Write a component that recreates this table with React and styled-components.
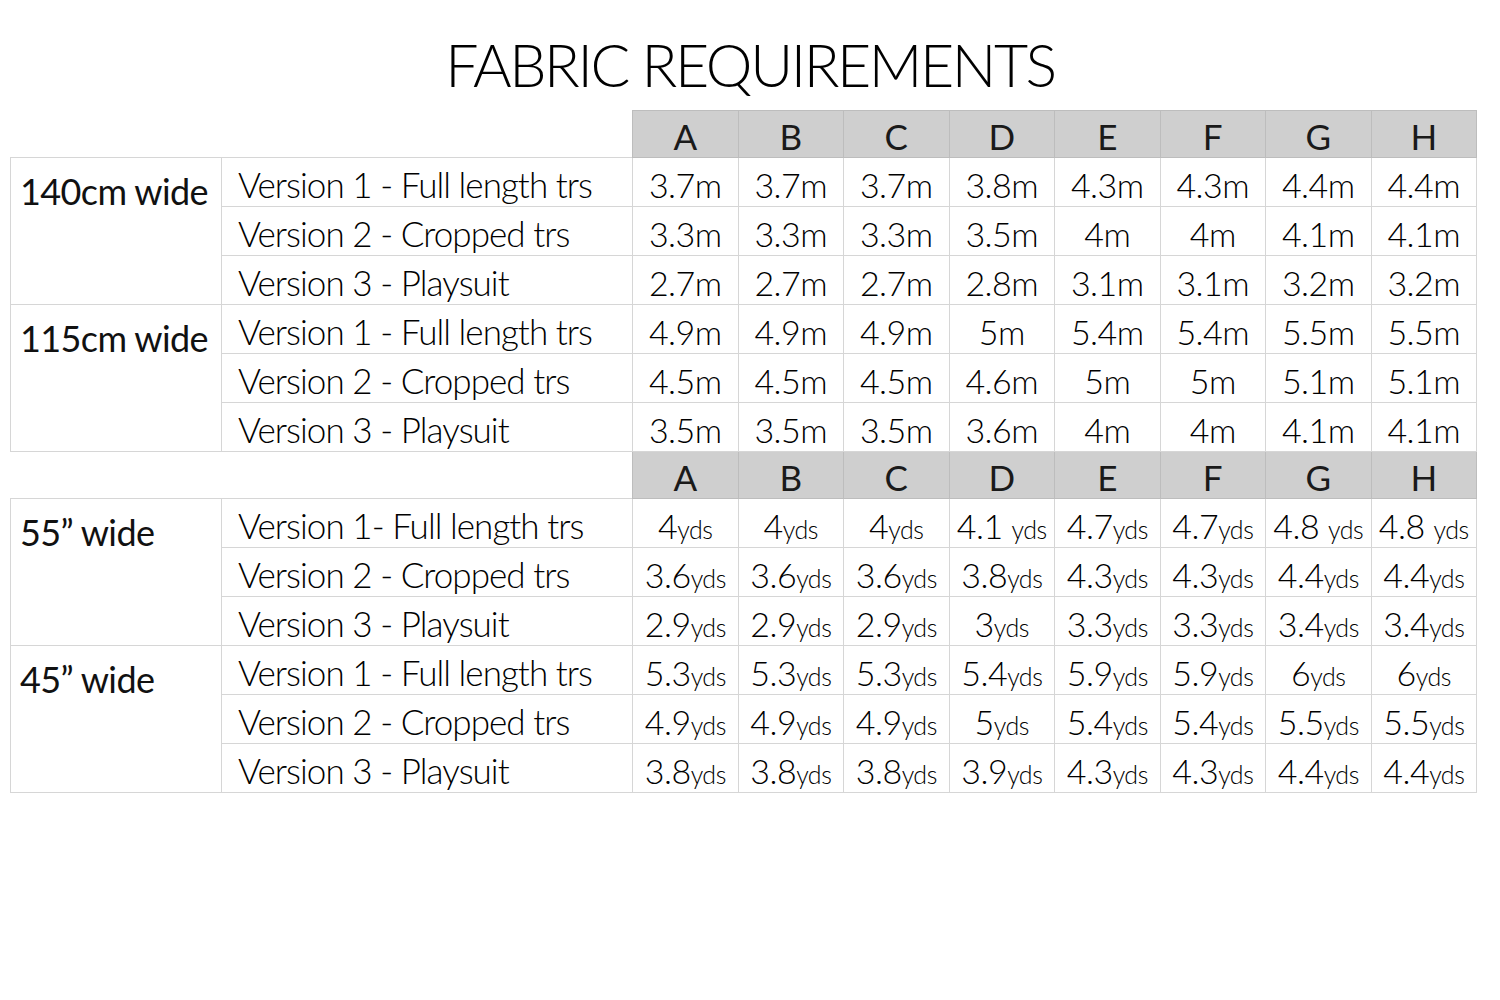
import React from 'react'
import styled, { createGlobalStyle } from 'styled-components'

const GlobalStyle = createGlobalStyle`
  body {
    margin: 0;
    background: #fff;
    color: #111;
    font-family: Lato, "Noto Sans", sans-serif;
  }
`

const SIZES = ['A', 'B', 'C', 'D', 'E', 'F', 'G', 'H']

const METRIC = [
  {
    label: '140cm wide',
    rows: [
      ['Version 1 - Full length trs', ['3.7m', '3.7m', '3.7m', '3.8m', '4.3m', '4.3m', '4.4m', '4.4m']],
      ['Version 2 - Cropped trs', ['3.3m', '3.3m', '3.3m', '3.5m', '4m', '4m', '4.1m', '4.1m']],
      ['Version 3 - Playsuit', ['2.7m', '2.7m', '2.7m', '2.8m', '3.1m', '3.1m', '3.2m', '3.2m']],
    ],
  },
  {
    label: '115cm wide',
    rows: [
      ['Version 1 - Full length trs', ['4.9m', '4.9m', '4.9m', '5m', '5.4m', '5.4m', '5.5m', '5.5m']],
      ['Version 2 - Cropped trs', ['4.5m', '4.5m', '4.5m', '4.6m', '5m', '5m', '5.1m', '5.1m']],
      ['Version 3 - Playsuit', ['3.5m', '3.5m', '3.5m', '3.6m', '4m', '4m', '4.1m', '4.1m']],
    ],
  },
]

const IMPERIAL = [
  {
    label: '55\u201D wide',
    rows: [
      ['Version 1- Full length trs', ['4', '4', '4', '4.1 ', '4.7', '4.7', '4.8 ', '4.8 ']],
      ['Version 2 - Cropped trs', ['3.6', '3.6', '3.6', '3.8', '4.3', '4.3', '4.4', '4.4']],
      ['Version 3 - Playsuit', ['2.9', '2.9', '2.9', '3', '3.3', '3.3', '3.4', '3.4']],
    ],
  },
  {
    label: '45\u201D wide',
    rows: [
      ['Version 1 - Full length trs', ['5.3', '5.3', '5.3', '5.4', '5.9', '5.9', '6', '6']],
      ['Version 2 - Cropped trs', ['4.9', '4.9', '4.9', '5', '5.4', '5.4', '5.5', '5.5']],
      ['Version 3 - Playsuit', ['3.8', '3.8', '3.8', '3.9', '4.3', '4.3', '4.4', '4.4']],
    ],
  },
]

const HeaderRow = () => (
  <HeadRow>
    <BlankHead colSpan={2} />
    {SIZES.map((s) => (
      <HeadCell key={s}>{s}</HeadCell>
    ))}
  </HeadRow>
)

const Group = ({ group, imperial }) =>
  group.rows.map(([version, values], i) => (
    <BodyRow key={version + i}>
      {i === 0 && <GroupCell rowSpan={3}>{group.label}</GroupCell>}
      <VersionCell>{version}</VersionCell>
      {values.map((v, j) => (
        <ValueCell key={j}>
          {imperial ? (
            <>
              {v}
              <Unit>yds</Unit>
            </>
          ) : (
            v
          )}
        </ValueCell>
      ))}
    </BodyRow>
  ))

const App = () => {
  return (
    <Page>
      <GlobalStyle />
      <Title>FABRIC REQUIREMENTS</Title>
      <Table>
        <colgroup>
          <col style={{ width: 211 }} />
          <col style={{ width: 411 }} />
          {SIZES.map((s) => (
            <col key={s} style={{ width: 105.5 }} />
          ))}
        </colgroup>
        <tbody>
          <HeaderRow />
          {METRIC.map((g) => (
            <Group key={g.label} group={g} />
          ))}
          <HeaderRow />
          {IMPERIAL.map((g) => (
            <Group key={g.label} group={g} imperial />
          ))}
        </tbody>
      </Table>
    </Page>
  )
}

export default App

const Page = styled.div`
  width: 1500px;
  height: 1000px;
  overflow: hidden;
  background: #fff;
`

const Title = styled.h1`
  margin: 0;
  height: 110px;
  padding-top: 35px;
  box-sizing: border-box;
  text-align: center;
  font-size: 59px;
  font-weight: 300;
  line-height: 60px;
  letter-spacing: -2.4px;
  color: #000;
`

const Table = styled.table`
  margin-left: 10px;
  width: 1466px;
  table-layout: fixed;
  border-collapse: collapse;
`

const HeadRow = styled.tr`
  height: 47px;
`

const BlankHead = styled.td`
  padding: 0;
  border: none;
`

const HeadCell = styled.td`
  padding: 0 0 3px;
  background: #cfcfcf;
  border: 1px solid #bdbdbd;
  text-align: center;
  vertical-align: bottom;
  font-size: 35px;
  font-weight: 400;
  line-height: 1;
  color: #1a1a1a;
`

const BodyRow = styled.tr`
  height: 49px;
`

const GroupCell = styled.td`
  padding: 15px 0 0 9px;
  border: 1px solid #d6d6d6;
  vertical-align: top;
  white-space: nowrap;
  font-size: 36px;
  font-weight: 400;
  line-height: 1;
  letter-spacing: -0.6px;
  color: #111;
`

const VersionCell = styled.td`
  padding: 0 0 4px 16px;
  border: 1px solid #d6d6d6;
  vertical-align: bottom;
  white-space: nowrap;
  font-size: 35px;
  font-weight: 300;
  line-height: 1;
  letter-spacing: -0.95px;
  color: #000;
`

const ValueCell = styled.td`
  padding: 0 0 4px;
  border: 1px solid #d6d6d6;
  text-align: center;
  vertical-align: bottom;
  white-space: nowrap;
  font-size: 34px;
  font-weight: 300;
  line-height: 1;
  letter-spacing: -0.5px;
  color: #000;
`

const Unit = styled.span`
  font-size: 25px;
  letter-spacing: -0.5px;
`
